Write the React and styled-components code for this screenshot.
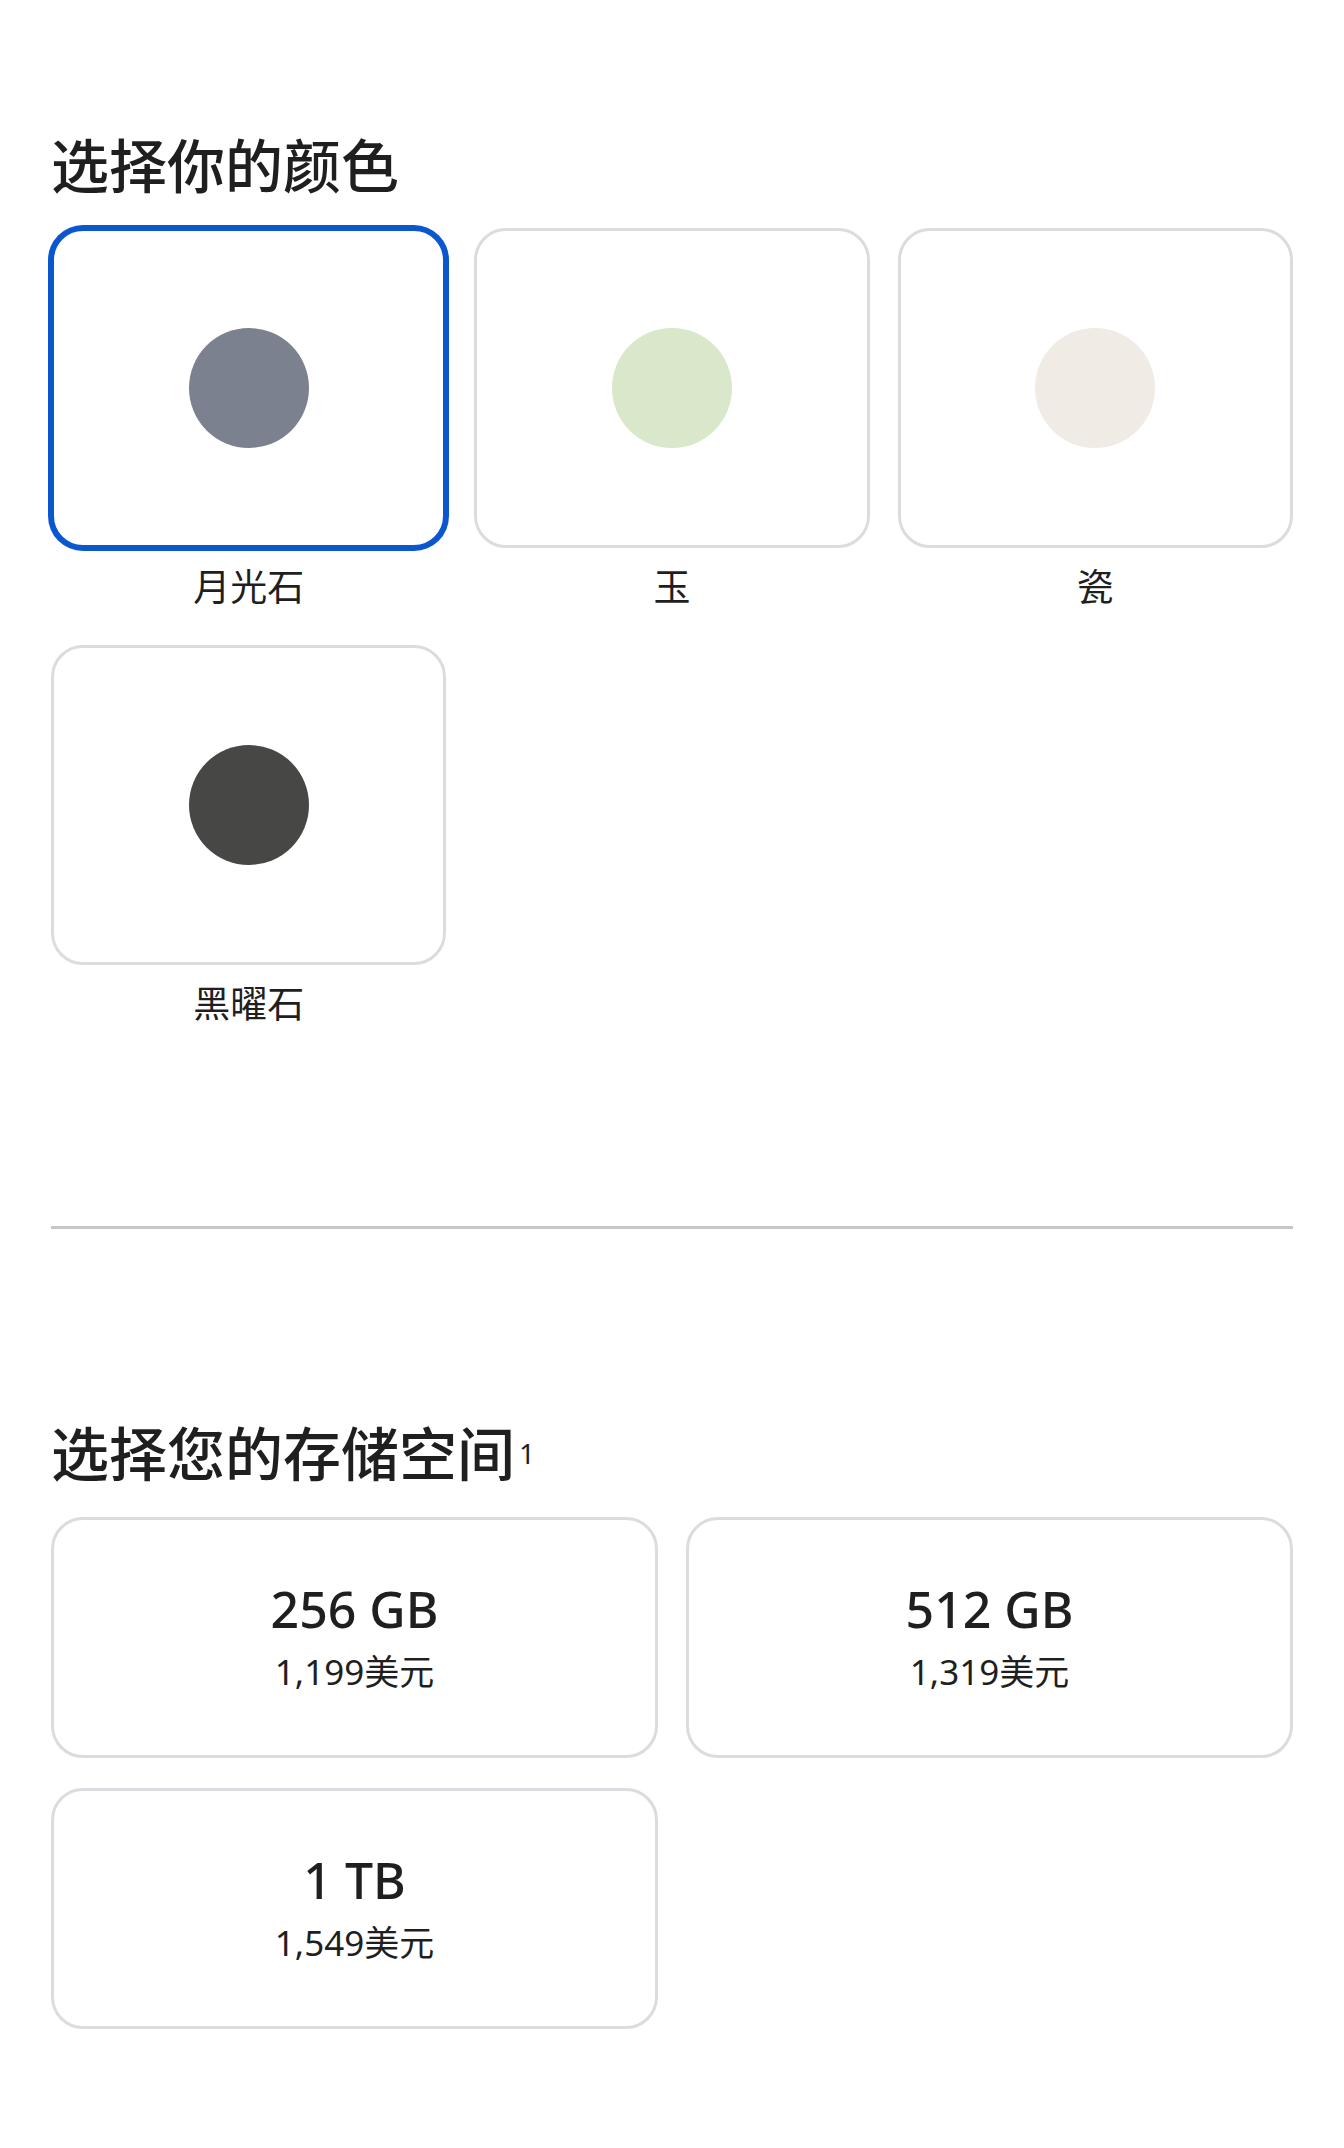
import React from "react";
import styled, { createGlobalStyle } from "styled-components";

const GlobalStyle = createGlobalStyle`
  html, body {
    margin: 0;
    padding: 0;
    background: #ffffff;
  }

  body {
    font-family: "Noto Sans", "Noto Sans CJK SC", sans-serif;
    color: #1f1f1f;
  }

  * {
    box-sizing: border-box;
  }
`;

const COLORS = [
  { id: "moonstone", name: "月光石", swatch: "#7c8190" },
  { id: "jade", name: "玉", swatch: "#d9e8cb" },
  { id: "porcelain", name: "瓷", swatch: "#f1ebe5" },
  { id: "obsidian", name: "黑曜石", swatch: "#474845" },
];

const STORAGE = [
  { id: "256", size: "256 GB", price: "1,199美元" },
  { id: "512", size: "512 GB", price: "1,319美元" },
  { id: "1tb", size: "1 TB", price: "1,549美元" },
];

function App() {
  const selectedColor = "moonstone";

  return (
    <Page>
      <GlobalStyle />
      <ColorSection>
        <Heading>选择你的颜色</Heading>
        <ColorGrid>
          {COLORS.map((color) => (
            <ColorOption key={color.id}>
              <SwatchCard $selected={color.id === selectedColor}>
                <Swatch $color={color.swatch} />
              </SwatchCard>
              <ColorName>{color.name}</ColorName>
            </ColorOption>
          ))}
        </ColorGrid>
      </ColorSection>

      <Divider />

      <StorageSection>
        <Heading>
          选择您的存储空间<Footnote>1</Footnote>
        </Heading>
        <StorageGrid>
          {STORAGE.map((option) => (
            <StorageCard key={option.id}>
              <Size>{option.size}</Size>
              <Price>{option.price}</Price>
            </StorageCard>
          ))}
        </StorageGrid>
      </StorageSection>
    </Page>
  );
}

const Page = styled.main`
  width: 1344px;
  min-height: 2148px;
  padding: 0 51px;
  background: #ffffff;
`;

const ColorSection = styled.section`
  padding-top: 128px;
`;

const StorageSection = styled.section`
  padding-top: 187px;
`;

const Heading = styled.h2`
  margin: 0 0 25px;
  font-size: 58px;
  line-height: 1.3;
  font-weight: 500;
  color: #1f1f1f;
`;

const Footnote = styled.sup`
  font-size: 28px;
  font-weight: 400;
  line-height: 0;
  margin-left: 4px;
  vertical-align: 12px;
`;

const ColorGrid = styled.div`
  display: grid;
  grid-template-columns: repeat(3, 1fr);
  column-gap: 28px;
  row-gap: 33px;
`;

const ColorOption = styled.div`
  display: flex;
  flex-direction: column;
  align-items: center;
`;

const SwatchCard = styled.button`
  width: 100%;
  height: 320px;
  display: flex;
  align-items: center;
  justify-content: center;
  padding: 0;
  background: #ffffff;
  border: 3px solid ${(p) => (p.$selected ? "#0b57d0" : "#dadce0")};
  border-radius: 32px;
  box-shadow: ${(p) => (p.$selected ? "0 0 0 3px #0b57d0" : "none")};
  cursor: pointer;
`;

const Swatch = styled.span`
  width: 120px;
  height: 120px;
  border-radius: 50%;
  background: ${(p) => p.$color};
`;

const ColorName = styled.span`
  margin-top: 14px;
  font-size: 37px;
  line-height: 50px;
  color: #1f1f1f;
`;

const Divider = styled.hr`
  margin: 197px 0 0;
  border: 0;
  height: 3px;
  background: #c7c7c7;
`;

const StorageGrid = styled.div`
  display: grid;
  grid-template-columns: repeat(2, 1fr);
  column-gap: 28px;
  row-gap: 30px;
`;

const StorageCard = styled.button`
  height: 241px;
  display: flex;
  flex-direction: column;
  align-items: center;
  justify-content: center;
  gap: 10px;
  background: #ffffff;
  border: 3px solid #dadce0;
  border-radius: 32px;
  font-family: inherit;
  cursor: pointer;
`;

const Size = styled.span`
  font-size: 50px;
  line-height: 60px;
  font-weight: 500;
  color: #1f1f1f;
`;

const Price = styled.span`
  font-size: 35px;
  line-height: 46px;
  font-weight: 400;
  color: #1f1f1f;
`;

export default App;
